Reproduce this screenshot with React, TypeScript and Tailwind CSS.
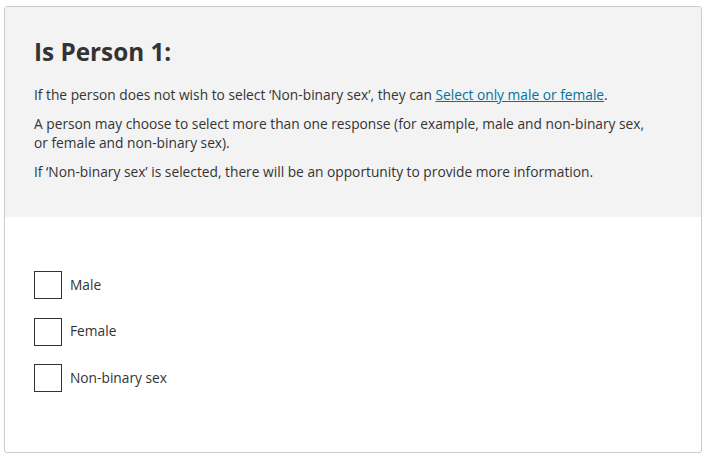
import React from "react";

const options = ["Male", "Female", "Non-binary sex"];

const App = () => {
  return (
    <div
      className="w-[706px] h-[458px] bg-white pt-[6px] pl-[4px]"
      style={{ fontFamily: '"Open Sans", "Noto Sans", sans-serif' }}
    >
      <div className="w-[698px] h-[447px] border border-[#cccccc] rounded-[3px] overflow-hidden text-[#333333]">
        <div className="bg-[#f3f3f3] h-[210px] pl-[29px] pr-[30px] pt-[30px]">
          <h1 className="text-[24.3px] leading-[30px] font-bold">Is Person 1:</h1>
          <div className="mt-[18px] text-[13.75px] leading-[19.5px] flex flex-col gap-[9px]">
            <p>
              If the person does not wish to select ‘Non-binary sex’, they can{" "}
              <a href="#" className="text-[#00739d] underline">
                Select only male or female
              </a>
              .
            </p>
            <p>
              A person may choose to select more than one response (for example, male and non-binary sex,
              <br />
              or female and non-binary sex).
            </p>
            <p>If ‘Non-binary sex’ is selected, there will be an opportunity to provide more information.</p>
          </div>
        </div>
        <div className="pl-[29px] pt-[54px] flex flex-col gap-[18.5px]">
          {options.map((o) => (
            <label key={o} className="flex items-center gap-[8px] text-[13.75px]">
              <span className="w-[28px] h-[28px] border border-[#333333] bg-white" />
              {o}
            </label>
          ))}
        </div>
      </div>
    </div>
  );
};

export default App;
